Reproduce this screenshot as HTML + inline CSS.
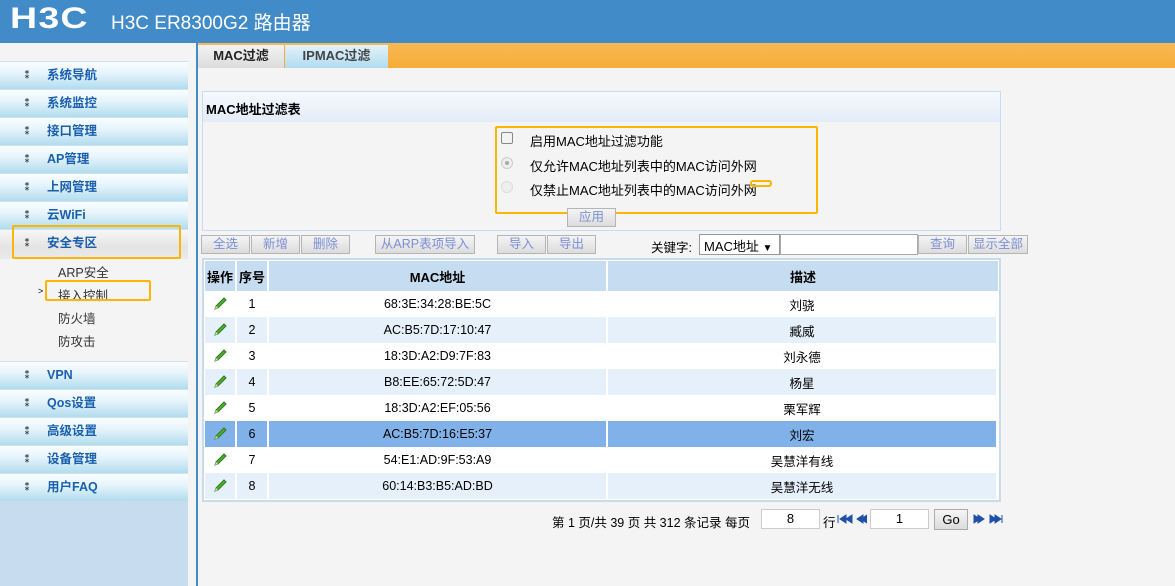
<!DOCTYPE html>
<html><head><meta charset="utf-8"><style>
*{margin:0;padding:0;box-sizing:border-box}
body{width:1175px;height:586px;overflow:hidden;background:#f4f4f4;font-family:"Liberation Sans","Noto Sans CJK SC",sans-serif;font-size:12px;color:#000;position:relative}
.a{position:absolute}
#hd{left:0;top:0;width:1175px;height:43px;background:#418bc8}
#logo{left:10px;top:2px;color:#fff;font:bold 30px "Liberation Sans",sans-serif;letter-spacing:1px;transform:scaleX(1.25);transform-origin:left}
#ttl{left:111px;top:8px;color:#fff;font-size:19px}
.si{position:absolute;left:0;width:188px;height:28px;background:linear-gradient(#fafdff,#e6f5fb 40%,#b2dcef);border-top:1px solid #cfe3ef;color:#1a5fae;font-weight:bold;font-size:12.5px;padding-left:47px;line-height:27px}
.si:before{content:"⁑";position:absolute;left:22px;top:0;color:#223;font-size:10px}
.sub{position:absolute;left:58px;font-size:12.5px;color:#333}
.ob{position:absolute;border:2px solid #fbb700;border-radius:2px}
.btn{position:absolute;height:19px;background:linear-gradient(#f4f4f4,#dcdcdc);border:1px solid #b5b5b5;color:#7c8fd6;text-align:center;line-height:17px;font-size:12.5px}
table{border-collapse:separate;border-spacing:0}
#tb{left:202px;top:258px;width:799px;background:#fff;border:2px solid #c9dcee;padding:1px}
#tb td{height:26px;text-align:center;font-size:12.5px;border-right:2px solid #fff}
#tb tr.h td{height:30px;background:#c6dcf0;font-weight:bold;font-size:13px}
#tb tr.e td{background:#e6f0fa}
#tb tr.s td{background:#80b2e9}
svg.p{vertical-align:middle}
</style></head><body>
<svg width="0" height="0" style="position:absolute"><defs><symbol id="pen" viewBox="0 0 16 16"><path d="M3 13 L4 10 L12 2 L14 4 L6 12 Z" fill="#4fae32" stroke="#2d7a1c" stroke-width="1"/><path d="M3 13 L4 10 L6 12 Z" fill="#e8d9a8"/></symbol></defs></svg>
<div id="hd" class="a"></div>
<div id="logo" class="a">H3C</div>
<div id="ttl" class="a">H3C ER8300G2 路由器</div>

<div class="a" style="left:0;top:501px;width:188px;height:85px;background:#c8dcf0"></div>
<div class="a" style="left:196px;top:43px;width:2px;height:543px;background:#418bc8"></div>

<div class="si" style="top:61px">系统导航</div>
<div class="si" style="top:89px">系统监控</div>
<div class="si" style="top:117px">接口管理</div>
<div class="si" style="top:145px">AP管理</div>
<div class="si" style="top:173px">上网管理</div>
<div class="si" style="top:201px">云WiFi</div>
<div class="si" style="top:229px;height:30px;background:linear-gradient(#f7f7f7,#e4e4e4 60%,#eaeaea)">安全专区</div>
<div class="ob" style="left:12px;top:225px;width:169px;height:34px"></div>
<div class="sub" style="top:262px">ARP安全</div>
<div class="sub" style="top:285px">接入控制</div>
<div class="a" style="left:38px;top:286px;font-size:9px">&gt;</div>
<div class="ob" style="left:45px;top:280px;width:106px;height:21px"></div>
<div class="sub" style="top:308px">防火墙</div>
<div class="sub" style="top:331px">防攻击</div>
<div class="si" style="top:361px">VPN</div>
<div class="si" style="top:389px">Qos设置</div>
<div class="si" style="top:417px">高级设置</div>
<div class="si" style="top:445px">设备管理</div>
<div class="si" style="top:473px">用户FAQ</div>

<div class="a" style="left:198px;top:43px;width:977px;height:25px;background:linear-gradient(#f8b853,#f6ad38)"></div>
<div class="a" style="left:198px;top:45px;width:86px;height:23px;background:linear-gradient(#f2f2f2,#dcdcdc);font-weight:bold;font-size:13px;line-height:22px;text-align:center;color:#222">MAC过滤</div>
<div class="a" style="left:284px;top:45px;width:104px;height:23px;background:linear-gradient(#e2f3fb,#b1dbef);border-left:1px solid #f6ad38;font-weight:bold;font-size:13px;line-height:22px;text-align:center;color:#444">IPMAC过滤</div>

<div class="a" style="left:202px;top:91px;width:799px;height:140px;border:1px solid #c9dcee;background:#f4f4f4"></div>
<div class="a" style="left:203px;top:92px;width:797px;height:30px;background:linear-gradient(#f6f9fe,#e2ecf8);font-weight:bold;font-size:13px;padding:7px 0 0 3px">MAC地址过滤表</div>
<div class="a" style="left:501px;top:132px;width:12px;height:12px;border:1px solid #888;border-radius:2px;background:#f3f3f3"></div>
<div class="a" style="left:530px;top:131px;font-size:13px">启用MAC地址过滤功能</div>
<div class="a" style="left:501px;top:157px;width:12px;height:12px;border:1px solid #ccc;border-radius:50%;background:#eee"><div class="a" style="left:3px;top:3px;width:4px;height:4px;border-radius:50%;background:#aaa"></div></div>
<div class="a" style="left:530px;top:156px;font-size:13px">仅允许MAC地址列表中的MAC访问外网</div>
<div class="a" style="left:501px;top:181px;width:12px;height:12px;border:1px solid #ddd;border-radius:50%;background:#eee"></div>
<div class="a" style="left:530px;top:180px;font-size:13px">仅禁止MAC地址列表中的MAC访问外网</div>
<div class="ob" style="left:495px;top:126px;width:323px;height:88px"></div>
<div class="ob" style="left:750px;top:180px;width:22px;height:7px;border-radius:3px"></div>
<div class="btn" style="left:567px;top:208px;width:49px">应用</div>

<div class="btn" style="left:201px;top:235px;width:49px">全选</div>
<div class="btn" style="left:251px;top:235px;width:49px">新增</div>
<div class="btn" style="left:301px;top:235px;width:49px">删除</div>
<div class="btn" style="left:375px;top:235px;width:100px">从ARP表项导入</div>
<div class="btn" style="left:497px;top:235px;width:49px">导入</div>
<div class="btn" style="left:547px;top:235px;width:49px">导出</div>
<div class="a" style="left:651px;top:237px;font-size:12.5px">关键字:</div>
<div class="a" style="left:699px;top:234px;width:81px;height:21px;background:#fff;border:1px solid #999;font-size:13px;padding:1px 4px">MAC地址 <span style="font-size:10px">▼</span></div>
<div class="a" style="left:780px;top:234px;width:138px;height:21px;background:#fff;border:1px solid #aaa"></div>
<div class="btn" style="left:918px;top:235px;width:49px">查询</div>
<div class="btn" style="left:968px;top:235px;width:60px">显示全部</div>

<table id="tb" class="a">
<tr class="h"><td style="width:32px">操作</td><td style="width:32px">序号</td><td style="width:339px">MAC地址</td><td style="border-right:0">描述</td></tr>
<tr><td><svg class="p" width="16" height="16"><use href="#pen"/></svg></td><td>1</td><td>68:3E:34:28:BE:5C</td><td>刘骁</td></tr>
<tr class="e"><td><svg class="p" width="16" height="16"><use href="#pen"/></svg></td><td>2</td><td>AC:B5:7D:17:10:47</td><td>臧威</td></tr>
<tr><td><svg class="p" width="16" height="16"><use href="#pen"/></svg></td><td>3</td><td>18:3D:A2:D9:7F:83</td><td>刘永德</td></tr>
<tr class="e"><td><svg class="p" width="16" height="16"><use href="#pen"/></svg></td><td>4</td><td>B8:EE:65:72:5D:47</td><td>杨星</td></tr>
<tr><td><svg class="p" width="16" height="16"><use href="#pen"/></svg></td><td>5</td><td>18:3D:A2:EF:05:56</td><td>栗军辉</td></tr>
<tr class="s"><td><svg class="p" width="16" height="16"><use href="#pen"/></svg></td><td>6</td><td>AC:B5:7D:16:E5:37</td><td>刘宏</td></tr>
<tr><td><svg class="p" width="16" height="16"><use href="#pen"/></svg></td><td>7</td><td>54:E1:AD:9F:53:A9</td><td>吴慧洋有线</td></tr>
<tr class="e"><td><svg class="p" width="16" height="16"><use href="#pen"/></svg></td><td>8</td><td>60:14:B3:B5:AD:BD</td><td>吴慧洋无线</td></tr>
</table>

<div class="a" style="left:552px;top:512px;font-size:12.5px">第 1 页/共 39 页 共 312 条记录 每页</div>
<div class="a" style="left:761px;top:509px;width:59px;height:20px;background:#fff;border:1px solid #ccc;text-align:center;font-size:13px;line-height:18px">8</div>
<div class="a" style="left:823px;top:512px;font-size:12.5px">行</div>
<svg class="a" style="left:837px;top:514px" width="30" height="10"><path d="M1 1v8M9 1L3 5l6 4zM15 1L9 5l6 4z M26 1L20 5l6 4zM30 1L24 5l6 4z" fill="#1f4fa8" stroke="#1f4fa8" stroke-width="1"/></svg>
<div class="a" style="left:870px;top:509px;width:59px;height:20px;background:#fff;border:1px solid #ccc;text-align:center;font-size:13px;line-height:18px">1</div>
<div class="a" style="left:934px;top:509px;width:34px;height:21px;background:linear-gradient(#f5f5f5,#dcdcdc);border:1px solid #aaa;text-align:center;font-size:13px;line-height:19px">Go</div>
<svg class="a" style="left:973px;top:514px" width="30" height="10"><path d="M1 1l6 4-6 4zM5 1l6 4-6 4zM17 1l6 4-6 4zM22 1l6 4-6 4zM29 1v8" fill="#1f4fa8" stroke="#1f4fa8" stroke-width="1"/></svg>
</body></html>
